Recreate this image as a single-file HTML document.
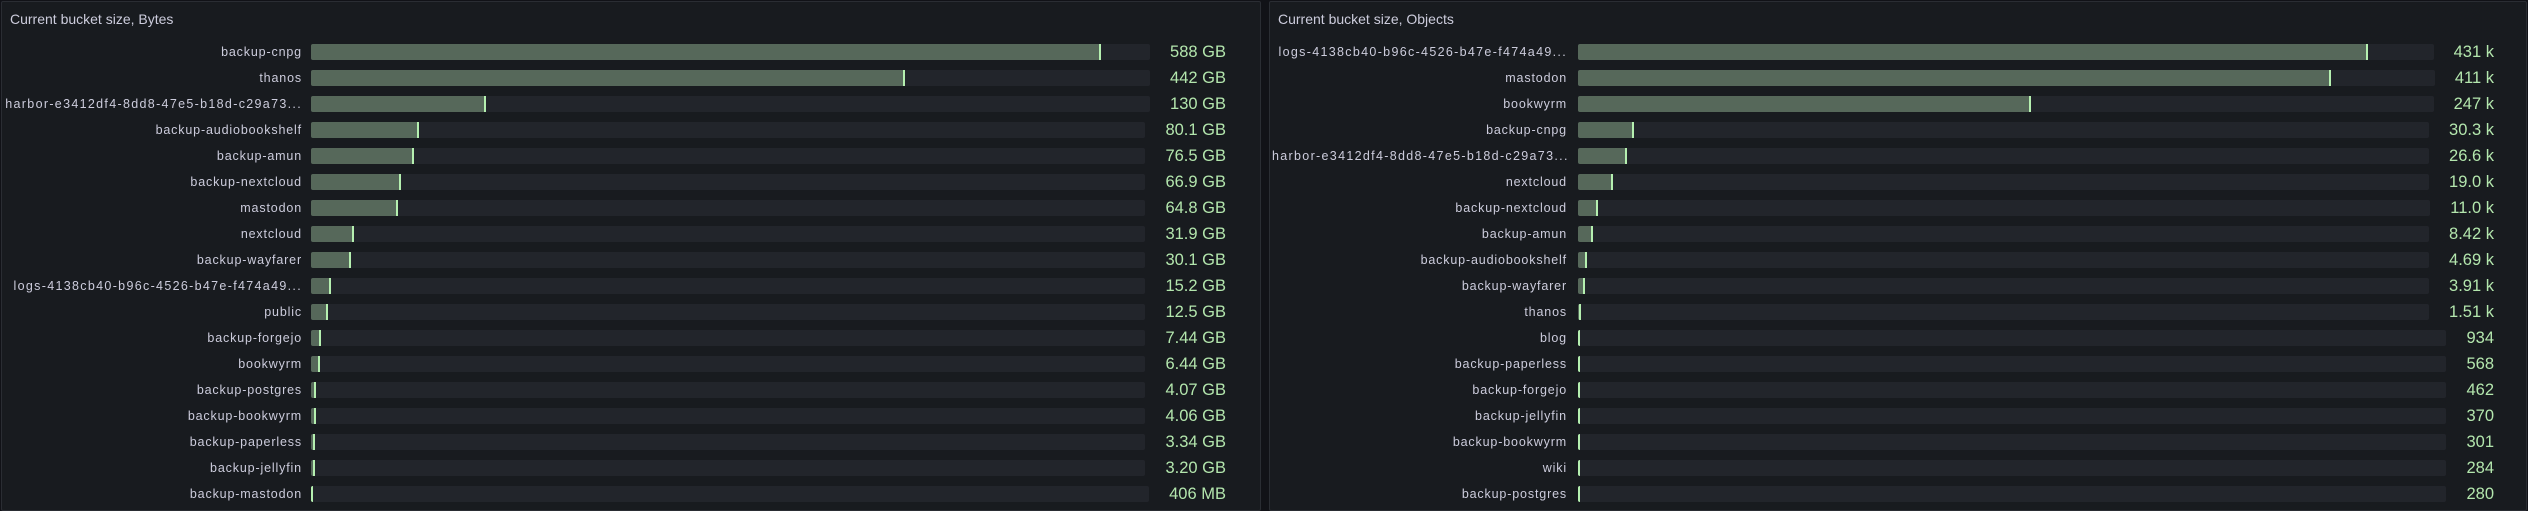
<!DOCTYPE html>
<html><head><meta charset="utf-8"><style>
*{margin:0;padding:0;box-sizing:border-box}
body{width:2528px;height:511px;background:#111217;overflow:hidden;font-family:"Liberation Sans",sans-serif;position:relative}
.p{position:absolute;top:1px;height:510px;background:#181b1f;border:1px solid #2a2d33;border-radius:2px}
.h{position:absolute;left:8px;top:9px;font-size:14px;color:#ccccdc}
.r{position:absolute;left:0;right:0;height:16px;display:flex;align-items:center}
.l{width:300px;text-align:right;font-size:12.5px;color:#ccccdc;letter-spacing:0.85px;white-space:nowrap;overflow:hidden;flex:none;padding-left:2px}
.l.w{letter-spacing:1.32px}
.t{flex:1;height:16px;background:#22252b;border-radius:2px;margin-left:9px;position:relative}
.t i{position:absolute;left:0;top:0;bottom:0;background:#56685a;border-right:2px solid #b5f0b0;border-radius:2px 0 0 2px;min-width:2px}
.v{flex:none;margin-left:20px;font-size:16.5px;color:#b3e6ad;white-space:nowrap}
#b .v{margin-right:34px}
#o .v{margin-right:32px}
#o .l{width:297px}
#o .t{margin-left:11px}
</style></head><body>
<div class="p" id="b" style="left:1px;width:1260px">
<div class="h">Current bucket size, Bytes</div>
<div class="r" style="top:42px"><span class="l">backup-cnpg</span><span class="t"><i style="width:790px"></i></span><span class="v">588 GB</span></div>
<div class="r" style="top:68px"><span class="l">thanos</span><span class="t"><i style="width:594px"></i></span><span class="v">442 GB</span></div>
<div class="r" style="top:94px"><span class="l w">harbor-e3412df4-8dd8-47e5-b18d-c29a73...</span><span class="t"><i style="width:175px"></i></span><span class="v">130 GB</span></div>
<div class="r" style="top:120px"><span class="l">backup-audiobookshelf</span><span class="t"><i style="width:108px"></i></span><span class="v">80.1 GB</span></div>
<div class="r" style="top:146px"><span class="l">backup-amun</span><span class="t"><i style="width:103px"></i></span><span class="v">76.5 GB</span></div>
<div class="r" style="top:172px"><span class="l">backup-nextcloud</span><span class="t"><i style="width:90px"></i></span><span class="v">66.9 GB</span></div>
<div class="r" style="top:198px"><span class="l">mastodon</span><span class="t"><i style="width:87px"></i></span><span class="v">64.8 GB</span></div>
<div class="r" style="top:224px"><span class="l">nextcloud</span><span class="t"><i style="width:43px"></i></span><span class="v">31.9 GB</span></div>
<div class="r" style="top:250px"><span class="l">backup-wayfarer</span><span class="t"><i style="width:40px"></i></span><span class="v">30.1 GB</span></div>
<div class="r" style="top:276px"><span class="l w">logs-4138cb40-b96c-4526-b47e-f474a49...</span><span class="t"><i style="width:20px"></i></span><span class="v">15.2 GB</span></div>
<div class="r" style="top:302px"><span class="l">public</span><span class="t"><i style="width:17px"></i></span><span class="v">12.5 GB</span></div>
<div class="r" style="top:328px"><span class="l">backup-forgejo</span><span class="t"><i style="width:10px"></i></span><span class="v">7.44 GB</span></div>
<div class="r" style="top:354px"><span class="l">bookwyrm</span><span class="t"><i style="width:9px"></i></span><span class="v">6.44 GB</span></div>
<div class="r" style="top:380px"><span class="l">backup-postgres</span><span class="t"><i style="width:5px"></i></span><span class="v">4.07 GB</span></div>
<div class="r" style="top:406px"><span class="l">backup-bookwyrm</span><span class="t"><i style="width:5px"></i></span><span class="v">4.06 GB</span></div>
<div class="r" style="top:432px"><span class="l">backup-paperless</span><span class="t"><i style="width:4px"></i></span><span class="v">3.34 GB</span></div>
<div class="r" style="top:458px"><span class="l">backup-jellyfin</span><span class="t"><i style="width:4px"></i></span><span class="v">3.20 GB</span></div>
<div class="r" style="top:484px"><span class="l">backup-mastodon</span><span class="t"><i style="width:2px"></i></span><span class="v">406 MB</span></div>
</div>
<div class="p" id="o" style="left:1269px;width:1258px">
<div class="h">Current bucket size, Objects</div>
<div class="r" style="top:42px"><span class="l w">logs-4138cb40-b96c-4526-b47e-f474a49...</span><span class="t"><i style="width:790px"></i></span><span class="v">431 k</span></div>
<div class="r" style="top:68px"><span class="l">mastodon</span><span class="t"><i style="width:753px"></i></span><span class="v">411 k</span></div>
<div class="r" style="top:94px"><span class="l">bookwyrm</span><span class="t"><i style="width:453px"></i></span><span class="v">247 k</span></div>
<div class="r" style="top:120px"><span class="l">backup-cnpg</span><span class="t"><i style="width:56px"></i></span><span class="v">30.3 k</span></div>
<div class="r" style="top:146px"><span class="l w">harbor-e3412df4-8dd8-47e5-b18d-c29a73...</span><span class="t"><i style="width:49px"></i></span><span class="v">26.6 k</span></div>
<div class="r" style="top:172px"><span class="l">nextcloud</span><span class="t"><i style="width:35px"></i></span><span class="v">19.0 k</span></div>
<div class="r" style="top:198px"><span class="l">backup-nextcloud</span><span class="t"><i style="width:20px"></i></span><span class="v">11.0 k</span></div>
<div class="r" style="top:224px"><span class="l">backup-amun</span><span class="t"><i style="width:15px"></i></span><span class="v">8.42 k</span></div>
<div class="r" style="top:250px"><span class="l">backup-audiobookshelf</span><span class="t"><i style="width:9px"></i></span><span class="v">4.69 k</span></div>
<div class="r" style="top:276px"><span class="l">backup-wayfarer</span><span class="t"><i style="width:7px"></i></span><span class="v">3.91 k</span></div>
<div class="r" style="top:302px"><span class="l">thanos</span><span class="t"><i style="width:3px"></i></span><span class="v">1.51 k</span></div>
<div class="r" style="top:328px"><span class="l">blog</span><span class="t"><i style="width:2px"></i></span><span class="v">934</span></div>
<div class="r" style="top:354px"><span class="l">backup-paperless</span><span class="t"><i style="width:2px"></i></span><span class="v">568</span></div>
<div class="r" style="top:380px"><span class="l">backup-forgejo</span><span class="t"><i style="width:2px"></i></span><span class="v">462</span></div>
<div class="r" style="top:406px"><span class="l">backup-jellyfin</span><span class="t"><i style="width:2px"></i></span><span class="v">370</span></div>
<div class="r" style="top:432px"><span class="l">backup-bookwyrm</span><span class="t"><i style="width:2px"></i></span><span class="v">301</span></div>
<div class="r" style="top:458px"><span class="l">wiki</span><span class="t"><i style="width:2px"></i></span><span class="v">284</span></div>
<div class="r" style="top:484px"><span class="l">backup-postgres</span><span class="t"><i style="width:2px"></i></span><span class="v">280</span></div>
</div>
</body></html>
